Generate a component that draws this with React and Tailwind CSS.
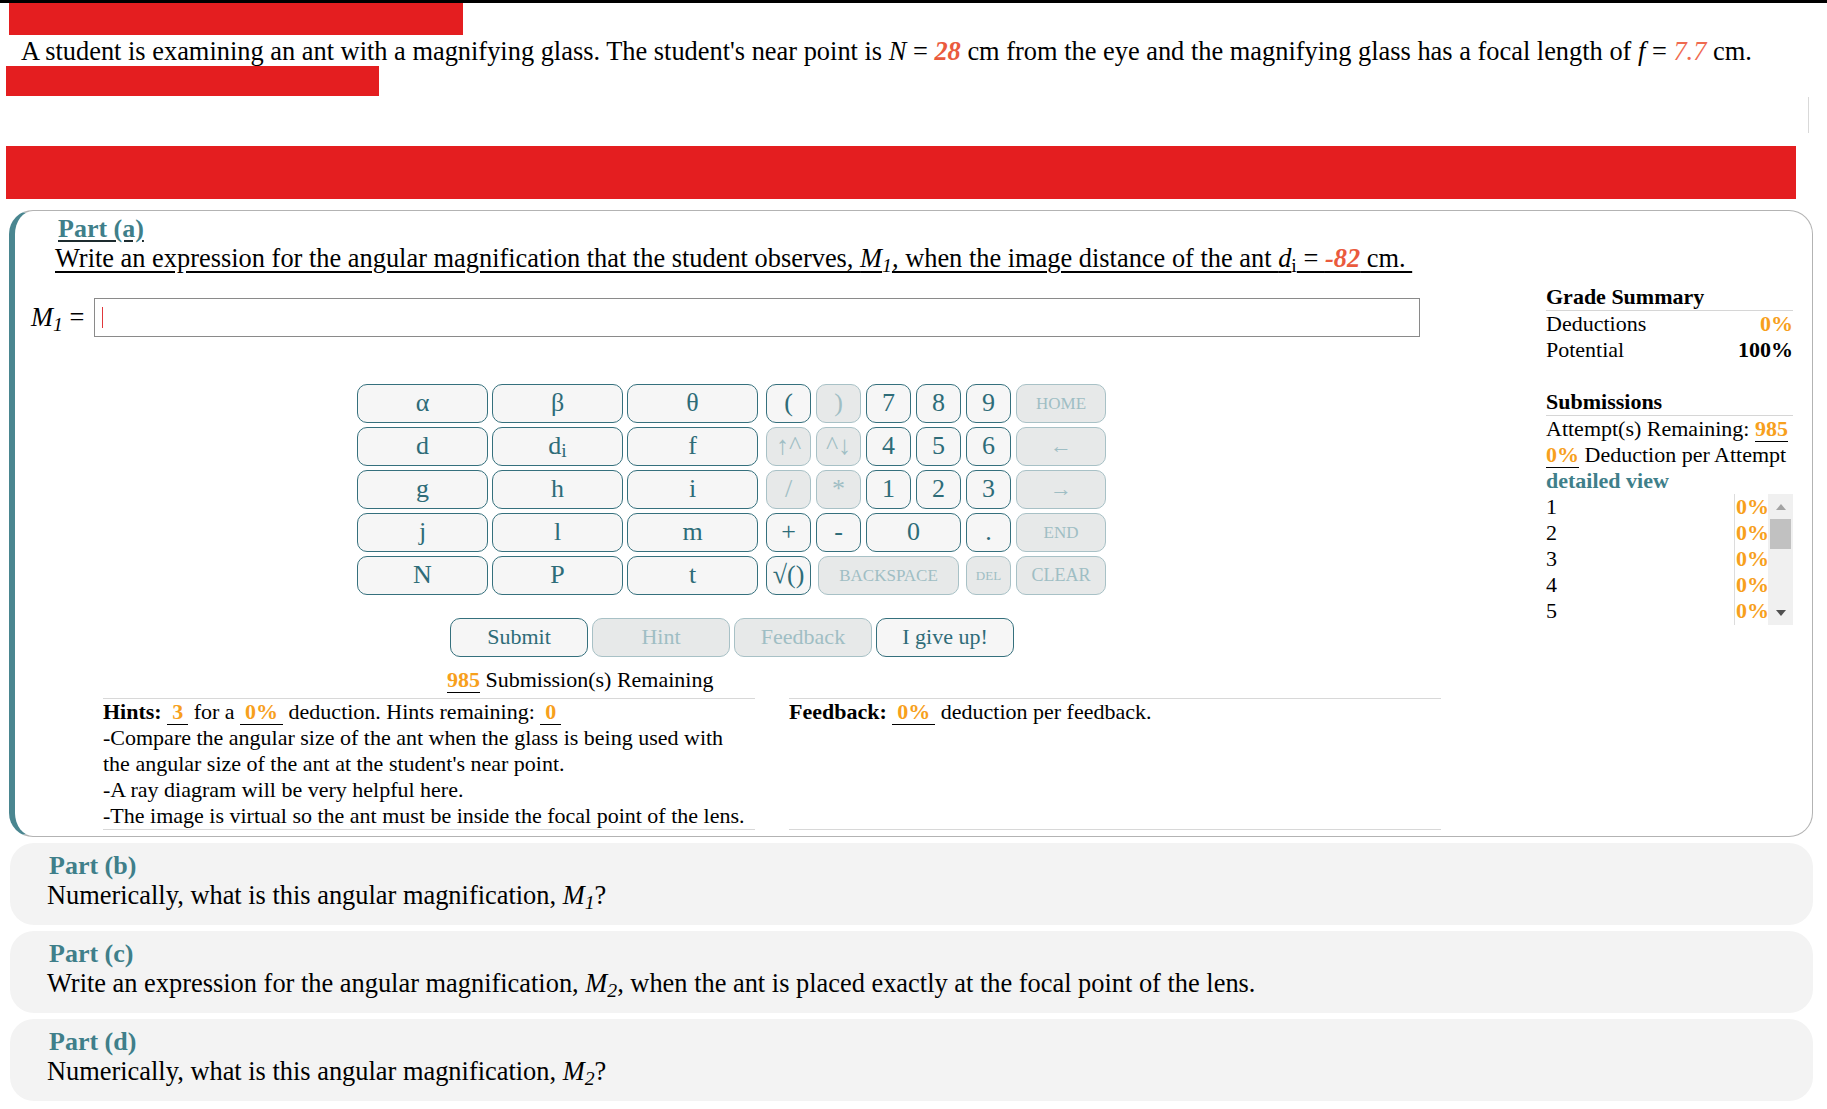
import React from 'react';
import clsx from 'clsx';

// colours picked from the screenshot
const TEAL = 'text-[#3f7f8a]';

const Key = ({ children, off, span, className = '' }) => (
  <div
    className={clsx(
      'h-[39px] rounded-[10px] border flex items-center justify-center leading-none',
      off ? 'bg-[#e7e9e9] border-[#a8c1c6] text-[#9fbec4]' : 'bg-[#f6f6f6] border-[#35707d] text-[#2e6c78]',
      span,
      className
    )}
  >
    {children}
  </div>
);

const Blank = ({ children, className = '' }) => (
  <span className={clsx('inline-block border-b border-black leading-[24px] text-[#f7a01c] font-bold', className)}>{children}</span>
);

const Keypad = () => (
  <div className="flex gap-[8px] text-[26px]">
    <div className="grid grid-cols-[131px_131px_131px] gap-x-[4px] gap-y-[4px]">
      <Key>α</Key>
      <Key>β</Key>
      <Key>θ</Key>
      <Key>d</Key>
      <Key>
        d<sub>i</sub>
      </Key>
      <Key>f</Key>
      <Key>g</Key>
      <Key>h</Key>
      <Key>i</Key>
      <Key>j</Key>
      <Key>l</Key>
      <Key>m</Key>
      <Key>N</Key>
      <Key>P</Key>
      <Key>t</Key>
    </div>
    <div className="grid grid-cols-[45px_45px_45px_45px_45px_90px] gap-x-[5px] gap-y-[4px]">
      <Key>(</Key>
      <Key off>)</Key>
      <Key>7</Key>
      <Key>8</Key>
      <Key>9</Key>
      <Key off className="text-[17px]">HOME</Key>

      <Key off>↑^</Key>
      <Key off>^↓</Key>
      <Key>4</Key>
      <Key>5</Key>
      <Key>6</Key>
      <Key off className="text-[22px]">←</Key>

      <Key off>/</Key>
      <Key off>*</Key>
      <Key>1</Key>
      <Key>2</Key>
      <Key>3</Key>
      <Key off className="text-[22px]">→</Key>

      <Key>+</Key>
      <Key>-</Key>
      <Key span="col-span-2">0</Key>
      <Key>.</Key>
      <Key off className="text-[17px]">END</Key>

      <Key>√()</Key>
      <Key off span="col-span-3" className="text-[17px] mx-[2px]">BACKSPACE</Key>
      <Key off className="text-[13px]">DEL</Key>
      <Key off className="text-[18px]">CLEAR</Key>
    </div>
  </div>
);

const Sidebar = () => (
  <div className="w-[247px] mr-[19px] pt-[73px] text-[22px] leading-[26px] shrink-0">
    <div className="font-bold border-b border-[#d6d6d6]">Grade Summary</div>
    <div className="flex justify-between">
      <span>Deductions</span>
      <span className="font-bold text-[#f7a01c]">0%</span>
    </div>
    <div className="flex justify-between">
      <span>Potential</span>
      <span className="font-bold">100%</span>
    </div>

    <div className="font-bold border-b border-[#d6d6d6] mt-[26px]">Submissions</div>
    <div>
      Attempt(s) Remaining: <Blank>985</Blank>
    </div>
    <div>
      <Blank>0%</Blank> Deduction per Attempt
    </div>
    <div className={clsx('font-bold', TEAL)}>detailed view</div>
    <div className="flex h-[131px]">
      <div className="flex-1">
        {[1, 2, 3, 4, 5].map((n) => (
          <div key={n}>{n}</div>
        ))}
      </div>
      <div className="w-[34px] border-l border-[#dcdcdc] pl-[1px] font-bold text-[#f7a01c]">
        {[1, 2, 3, 4, 5].map((n) => (
          <div key={n}>0%</div>
        ))}
      </div>
      <div className="w-[25px] bg-[#f0f0f0] flex flex-col">
        <div className="h-[25px] flex items-center justify-center">
          <div className="w-0 h-0 border-x-[5px] border-x-transparent border-b-[6px] border-b-[#a3a3a3]" />
        </div>
        <div className="h-[30px] mx-[2px] bg-[#c1c1c1]" />
        <div className="flex-1" />
        <div className="h-[25px] flex items-center justify-center">
          <div className="w-0 h-0 border-x-[5px] border-x-transparent border-t-[6px] border-t-[#505050]" />
        </div>
      </div>
    </div>
  </div>
);

const PartA = () => (
  <div className="ml-[9px] w-[1804px] mt-[11px] rounded-[24px] border border-[#b3b3b3] border-l-[6px] border-l-[#4a8690] flex">
    <div className="flex-1">
      <div className="pt-[3px] pl-[43px]">
        <span className={clsx('text-[26px] leading-[30px] font-bold underline decoration-[#1d2b2e] underline-offset-[3px]', TEAL)}>
          Part (a)
        </span>
      </div>
      <div className="pl-[40px] text-[26.4px] leading-[28px] whitespace-nowrap">
        <span className="underline underline-offset-[4px]">
          Write an expression for the angular magnification that the student observes, <i>M</i>
          <sub>
            <i>1</i>
          </sub>
          , when the image distance of the ant <i>d</i>
          <sub>i</sub> = <b className="italic text-[#ea5a3d]">-82</b> cm.&nbsp;
        </span>
      </div>

      <div className="flex items-center pl-[16px] mt-[26px]">
        <span className="text-[26.4px] w-[63px] whitespace-nowrap">
          <i>M</i>
          <sub>
            <i>1</i>
          </sub>{' '}
          =
        </span>
        <div className="w-[1326px] h-[39px] border border-[#8a8a8a] flex items-center pl-[7px]">
          <div className="w-[1px] h-[21px] bg-[#e0383b]" />
        </div>
      </div>

      <div className="ml-[342px] w-[750px] mt-[46px]">
        <Keypad />
        <div className="flex justify-center gap-[4px] mt-[23px] text-[22px]">
          <Key className="w-[138px]">Submit</Key>
          <Key off className="w-[138px]">Hint</Key>
          <Key off className="w-[138px]">Feedback</Key>
          <Key className="w-[138px]">I give up!</Key>
        </div>
        <div className="pl-[90px] mt-[10px] text-[22px] leading-[26px]">
          <Blank>985</Blank> Submission(s) Remaining
        </div>
      </div>

      <div className="flex gap-[34px] ml-[88px] mt-[5px] mb-[6px] text-[22px] leading-[26px]">
        <div className="w-[652px] border-y border-[#d8d8d8]">
          <div>
            <b>Hints:</b> <Blank className="px-[5px]">3</Blank> for a <Blank className="px-[5px]">0%</Blank> deduction. Hints
            remaining: <Blank className="px-[5px]">0</Blank>
          </div>
          <div>-Compare the angular size of the ant when the glass is being used with the angular size of the ant at the student's near point.</div>
          <div>-A ray diagram will be very helpful here.</div>
          <div>-The image is virtual so the ant must be inside the focal point of the lens.</div>
        </div>
        <div className="w-[652px] border-y border-[#d8d8d8]">
          <b>Feedback:</b> <Blank className="px-[5px]">0%</Blank> deduction per feedback.
        </div>
      </div>
    </div>
    <Sidebar />
  </div>
);

const Part = ({ label, children }) => (
  <div className="ml-[10px] w-[1803px] h-[82px] rounded-[24px] bg-[#f3f3f3] pl-[37px] pt-[8px]">
    <div className={clsx('pl-[2px] text-[26px] leading-[30px] font-bold', TEAL)}>Part ({label})</div>
    <div className="text-[26.4px] leading-[28px] whitespace-nowrap">{children}</div>
  </div>
);

export default function App() {
  return (
    <div className="w-[1827px] min-h-[1109px] bg-white text-black font-['Liberation_Serif','Times_New_Roman',serif]">
      <div className="h-[3px] bg-black" />
      <div className="ml-[9px] w-[454px] h-[32px] bg-[#e41e20]" />
      <div className="mt-[2px] pl-[21px] text-[26.4px] leading-[28px] whitespace-nowrap">
        A student is examining an ant with a magnifying glass. The student's near point is <i>N</i> ={' '}
        <b className="italic text-[#ea5a3d]">28</b> cm from the eye and the magnifying glass has a focal length of <i>f</i> ={' '}
        <i className="text-[#ef6a50]">7.7</i> cm.
      </div>
      <div className="mt-[1px] ml-[6px] w-[373px] h-[30px] bg-[#e41e20]" />
      <div className="h-[50px] flex justify-end pr-[18px]">
        <div className="w-[1px] h-[36px] mt-[1px] bg-[#d9d9d9]" />
      </div>
      <div className="ml-[6px] w-[1790px] h-[53px] bg-[#e41e20]" />

      <PartA />

      <div className="flex flex-col gap-[6px] mt-[6px] pb-[7px]">
        <Part label="b">
          Numerically, what is this angular magnification, <i>M</i>
          <sub>
            <i>1</i>
          </sub>
          ?
        </Part>
        <Part label="c">
          Write an expression for the angular magnification, <i>M</i>
          <sub>
            <i>2</i>
          </sub>
          , when the ant is placed exactly at the focal point of the lens.
        </Part>
        <Part label="d">
          Numerically, what is this angular magnification, <i>M</i>
          <sub>
            <i>2</i>
          </sub>
          ?
        </Part>
      </div>
    </div>
  );
}
